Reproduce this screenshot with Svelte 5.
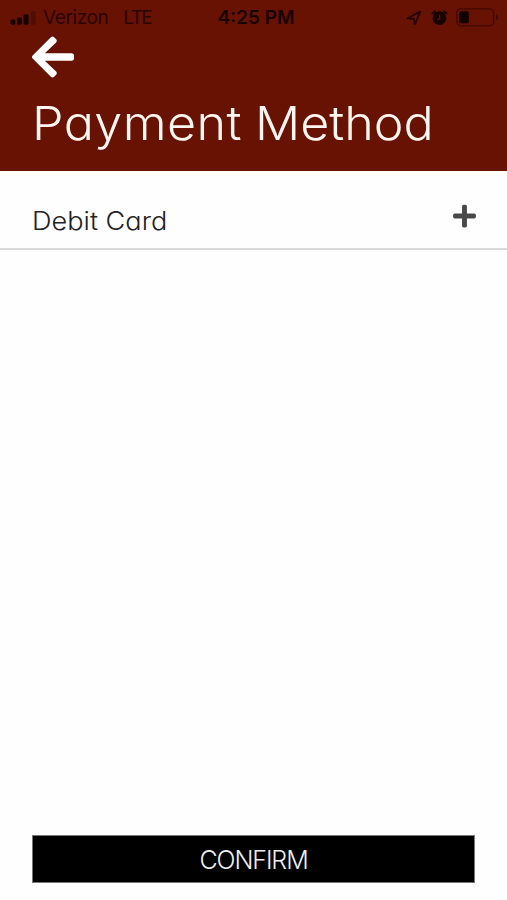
<script>
  const methods = ['Debit Card'];
</script>

<main class="screen">
  <header class="header">
    <div class="status">
      <div class="carrier">
        <svg class="signal" width="26" height="14" viewBox="0 0 26 14" aria-hidden="true">
          <rect x="0.5" y="8.6" width="4.8" height="5.2" rx="1.3" />
          <rect x="7" y="6.5" width="4.8" height="7.3" rx="1.3" />
          <rect x="13.6" y="3.4" width="5" height="10.4" rx="1.3" />
          <rect x="21" y="0" width="4.6" height="13.8" rx="1.3" opacity="0.28" />
        </svg>
        <span class="name">Verizon</span>
        <span class="network">LTE</span>
      </div>
      <div class="time">4:25 PM</div>
      <div class="indicators">
        <svg width="16" height="16" viewBox="0 0 16 16" aria-hidden="true">
          <path d="M1.4 8.4 14.3 1.6 8.9 14.2 7.7 8.8Z" fill="none" stroke="#220000" stroke-width="1.7" stroke-linejoin="round" />
        </svg>
        <svg class="alarm" width="17" height="16" viewBox="0 0 17 16" aria-hidden="true">
          <circle cx="8.5" cy="8.2" r="6.9" fill="#180000" />
          <path d="M1.4 3.4 4 1.3M15.6 3.4 13 1.3" stroke="#180000" stroke-width="1.8" stroke-linecap="round" />
          <path d="M8.7 4.4V8.5L6.2 9.9" fill="none" stroke="#681203" stroke-width="1.2" />
        </svg>
        <svg class="battery" width="43" height="19" viewBox="0 0 43 19" aria-hidden="true">
          <rect x="0.8" y="0.8" width="36.8" height="17" rx="4" fill="none" stroke="#3f0800" stroke-width="1.3" />
          <rect x="3.2" y="3.3" width="9.6" height="12" rx="1.5" fill="#120000" />
          <path d="M40 6.2Q42 7 42 9.2T40 12.2Z" fill="#3f0800" />
        </svg>
      </div>
    </div>
    <button class="back" aria-label="Back">
      <svg width="42" height="48" viewBox="0 0 448 512" aria-hidden="true">
        <path fill="#fff" d="M257.5 445.1l-22.2 22.2c-9.4 9.4-24.6 9.4-33.9 0L7 273c-9.4-9.4-9.4-24.6 0-33.9L201.4 44.7c9.4-9.4 24.6-9.4 33.9 0l22.2 22.2c9.5 9.5 9.3 25-.4 34.3L136.6 216H424c13.3 0 24 10.7 24 24v32c0 13.3-10.7 24-24 24H136.6l120.5 114.8c9.8 9.3 10 24.8.4 34.3z" />
      </svg>
    </button>
    <h1><span class="first">Payment</span> <span class="second">Method</span></h1>
  </header>

  <ul class="methods">
    {#each methods as method}
      <li>
        <span class="label">{method}</span>
        <button class="add" aria-label="Add {method}">
          <svg width="23" height="26" viewBox="0 0 448 512" aria-hidden="true">
            <path fill="#484848" d="M416 208H272V64c0-17.67-14.33-32-32-32h-32c-17.67 0-32 14.33-32 32v144H32c-17.67 0-32 14.33-32 32v32c0 17.67 14.33 32 32 32h144v144c0 17.67 14.33 32 32 32h32c17.67 0 32-14.33 32-32V304h144c17.67 0 32-14.33 32-32v-32c0-17.67-14.33-32-32-32z" />
          </svg>
        </button>
      </li>
    {/each}
  </ul>

  <footer>
    <button class="confirm"><span>CONFIRM</span></button>
  </footer>
</main>

<style>
  .screen {
    display: flex;
    flex-direction: column;
    box-sizing: border-box;
    width: 100%;
    height: 900px;
    overflow: hidden;
    background: #fefefe;
    font-family: Inter, "Noto Sans", sans-serif;
    font-feature-settings: "cv11" 1;
    font-weight: 300;
  }
  button {
    display: flex;
    padding: 0;
    border: 0;
    background: none;
    font: inherit;
    font-feature-settings: inherit;
  }
  svg { display: block; flex: none; }
  .header {
    box-sizing: border-box;
    height: 171px;
    background: #681203;
    flex: none;
  }
  .status {
    display: grid;
    grid-template-columns: 1fr auto 1fr;
    align-items: center;
    height: 33px;
    padding: 1px 8px 0 10px;
    color: #2b0300;
    font-family: Inter, sans-serif;
    font-feature-settings: normal;
    font-weight: 400;
    font-size: 19px;
    line-height: 33px;
  }
  .carrier { display: flex; align-items: center; white-space: nowrap; }
  .signal { fill: #180000; }
  .name { margin-left: 7px; letter-spacing: -0.4px; }
  .network { margin-left: 15px; letter-spacing: -1.6px; }
  .time { padding-left: 3px; color: #190000; font-weight: 600; font-size: 19px; }
  .indicators { display: flex; align-items: center; justify-content: flex-end; }
  .alarm { margin-left: 9px; }
  .battery { margin-left: 8px; }
  .back { margin: -1px 0 0 32px; }
  h1 {
    margin: 11px 0 0 32px;
    color: #fff5f1;
    font-size: 46.5px;
    font-weight: 300;
    line-height: 62px;
    white-space: nowrap;
    transform: scaleX(1.08);
    transform-origin: left center;
  }
  .first { letter-spacing: 0.4px; }
  .second { margin-left: -1px; }
  .methods { margin: 0; padding: 0; list-style: none; }
  li {
    display: flex;
    align-items: center;
    justify-content: space-between;
    box-sizing: border-box;
    height: 79px;
    padding: 12px 31px 0 32px;
    border-bottom: 2px solid #d9d9d9;
  }
  .label {
    padding-top: 11px;
    color: #222;
    font-size: 25px;
    line-height: 34px;
    white-space: nowrap;
    transform: scaleX(1.085);
    transform-origin: left center;
  }
  footer { margin-top: auto; padding: 0 32px 17px 32px; }
  .confirm {
    align-items: center;
    justify-content: center;
    box-sizing: border-box;
    width: 100%;
    height: 48px;
    padding-top: 2px;
    border: 1px solid #777;
    background: #000;
    color: #eee;
    font-size: 25px;
    line-height: 34px;
    letter-spacing: -1.1px;
  }
</style>
